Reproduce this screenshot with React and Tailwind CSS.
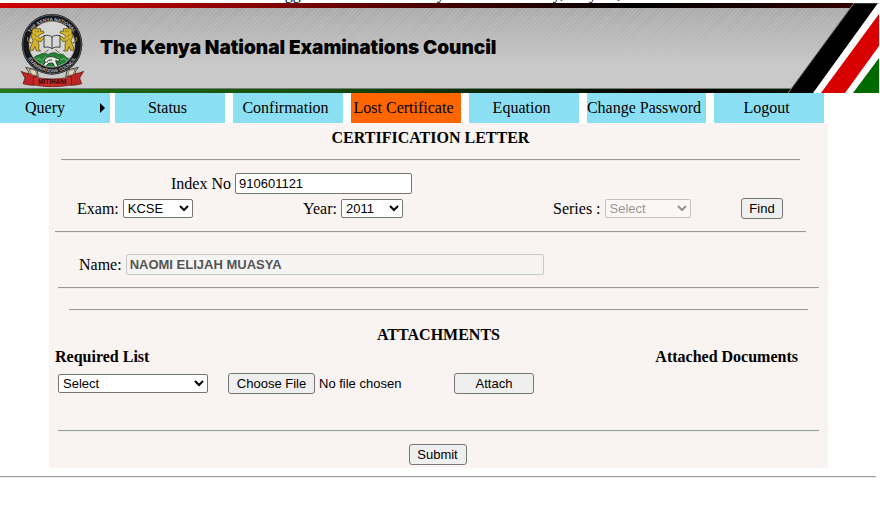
import React from "react";

const NAV_ITEMS = [
  { label: "Status" },
  { label: "Confirmation" },
  { label: "Lost Certificate", active: true },
  { label: "Equation" },
  { label: "Change Password", wide: true },
  { label: "Logout" },
];

const buttonClass =
  "h-[21px] rounded-[3px] border border-[#767676] bg-[#efefef] font-['Liberation_Sans',Arial,sans-serif] text-[13px] leading-[17px] text-black";
const selectClass =
  "h-[19px] rounded-[2px] border border-[#767676] bg-white font-['Liberation_Sans',Arial,sans-serif] text-[13px] leading-[17px] text-black";
const inputClass =
  "h-[21px] rounded-[2px] border px-[3px] font-['Liberation_Sans',Arial,sans-serif] text-[13px] leading-[17px]";

function Rule({ className = "" }) {
  return <hr className={`h-[2px] border-t border-b border-t-[#999999] border-b-[#eeeeee] ${className}`} />;
}

function Lion() {
  return (
    <g stroke="#4a3a08" strokeWidth="2" fill="#d3b52b">
      <path d="M62 62c-8-3-13 6-10 13-4 8-3 15 2 22l-4 13c-4 5-3 12-6 17h11l4-12 6 14h12l-6-6 1-14-4-10 10 2 8-9 9-3-3-6-11 3-7 6-5-7 10-8 8-2-2-6-9 1 1-8z" />
      <path d="M49 105c-10-2-14-10-10-18" fill="none" strokeWidth="4" />
      <path d="M49 105c-10-2-14-10-10-18" fill="none" stroke="#d3b52b" strokeWidth="2" />
      <path d="M60 68l5 5M57 78l8 9M58 92l7 6M66 69l6 1" fill="none" stroke="#6d5510" />
    </g>
  );
}

function Emblem() {
  return (
    <svg viewBox="0 0 225 240" className="h-[80px] w-[75px] shrink-0" role="img" aria-label="Council emblem">
      <defs>
        <path id="ring-top" d="M34 116a77 77 0 0 1 154 0" />
        <path id="ring-bottom" d="M28 110a83 83 0 0 0 166 0" />
        <clipPath id="ring-inner">
          <circle cx="111" cy="109" r="67" />
        </clipPath>
      </defs>
      <path d="M32 178l34 8 4 20-36-4 8-10zM190 178l-34 8-4 20 36-4-8-10z" fill="#c9c2a8" stroke="#4d4a3a" strokeWidth="3" />
      <circle cx="111" cy="109" r="91" fill="#17171b" />
      <circle cx="111" cy="109" r="88" fill="none" stroke="#777b80" strokeWidth="2" />
      <circle cx="111" cy="109" r="69" fill="#d4d5d4" stroke="#8a8d90" strokeWidth="2" />
      <g clipPath="url(#ring-inner)">
        <path d="M45 158c10-3 14-17 27-17 10-8 21-4 28-2 10-6 24-6 30 0 12-4 20 4 24 10l20 7-20 32H70z" fill="#268035" stroke="#12491e" strokeWidth="2" />
        <path d="M56 160l16-9 8 7 12-11 8 6M126 148l12 8 9-5 12 11M74 168l12-5" fill="none" stroke="#51a958" strokeWidth="4" />
        <path d="M88 157c4-11 22-15 35-7l11 3-2 7-10-2 6 16 8 6h-14l-9-15-12 1-9 10h-9l8-14z" fill="#e5e8df" stroke="#24382a" strokeWidth="3" />
        <path d="M96 164c0-6 8-9 15-8" fill="none" stroke="#24382a" strokeWidth="3" />
      </g>
      <Lion />
      <g transform="translate(222 0) scale(-1 1)">
        <Lion />
      </g>
      <path d="M87 83c9-2 18-1 24 4 6-5 15-6 24-4v35c-9-2-18-1-24 4-6-5-15-6-24-4z" fill="#d8d8d7" stroke="#3b3e42" strokeWidth="3" />
      <path d="M111 87v35" stroke="#34373b" strokeWidth="3" />
      <path d="M101 125l-13 10M121 125l13 10" stroke="#7c674a" strokeWidth="3" />
      <g fill="#b9b9b9" fontFamily="Liberation Sans, Arial, sans-serif" fontWeight="700" fontSize="14">
        <text textAnchor="middle">
          <textPath href="#ring-top" startOffset="50%">THE KENYA NATIONAL</textPath>
        </text>
        <text textAnchor="middle">
          <textPath href="#ring-bottom" startOffset="50%">EXAMINATIONS COUNCIL</textPath>
        </text>
      </g>
      <path d="M18 190c16 7 30 9 44 9l-4 33c-12 0-22-2-34-5l6-17z" fill="#bf2424" stroke="#4a1515" strokeWidth="2" />
      <path d="M206 190c-16 7-30 9-44 9l4 33c12 0 22-2 34-5l-6-17z" fill="#bf2424" stroke="#4a1515" strokeWidth="2" />
      <path d="M43 183l19 4 4 16-16-3zM181 183l-19 4-4 16 16-3z" fill="#ddd8c2" stroke="#5a5542" strokeWidth="2" />
      <path d="M55 206c36 9 78 9 114 0v24c-36 8-78 8-114 0z" fill="#cb2b27" stroke="#571515" strokeWidth="2" />
      <text x="112" y="229" textAnchor="middle" fill="#2d0808" fontFamily="Liberation Sans, Arial, sans-serif" fontWeight="700" fontSize="19">
        MITIHANI
      </text>
    </svg>
  );
}

function FlagStripes() {
  return (
    <svg viewBox="0 0 91 90" className="absolute top-0 right-0 h-[90px] w-[91px]" aria-hidden="true">
      <path d="M66 0H91V90H0z" fill="#fff" />
      <path d="M66 0H90L25 90H0z" fill="#000" />
      <path d="M91 11V43L57 90H33z" fill="#d90000" />
      <path d="M91 55V90H65z" fill="#006a00" />
      <path d="M0 90L66 0H91" fill="none" stroke="#777" strokeWidth="1" />
    </svg>
  );
}

function Banner() {
  return (
    <header className="relative mr-px">
      <div className="h-[5px] bg-[linear-gradient(to_right,#cc0000_0%,#b80000_11%,#700000_36%,#000000_72%,#180000_85%,#3a0000_100%)]" />
      <div className="flex h-[81px] items-center border-b border-[#71806e] bg-[linear-gradient(to_bottom,rgba(201,201,201,0)_0%,rgba(201,201,201,1)_72%),repeating-linear-gradient(135deg,#a6a6a6_0px,#a6a6a6_1px,#b2b2b2_1px,#b2b2b2_3px)] pl-[15px]">
        <Emblem />
        <h1 className="ml-[10px] font-['Inter','Liberation_Sans',sans-serif] text-[19px] leading-6 font-black whitespace-nowrap text-black">
          The Kenya National Examinations Council
        </h1>
      </div>
      <div className="h-[4px] bg-[linear-gradient(to_right,#267a18_0%,#1d6510_11%,#174d12_36%,#000000_76%,#062006_100%)]" />
      <FlagStripes />
    </header>
  );
}

function Nav() {
  return (
    <nav className="flex text-black">
      <a href="#query" className="mr-[5px] flex h-[30px] w-[110px] items-center justify-between bg-[#8bdff3] pr-[5px] pl-[25px]">
        Query
        <svg viewBox="0 0 5 10" className="h-[10px] w-[5px]" aria-hidden="true">
          <path d="M0 0L5 5L0 10z" fill="#000" />
        </svg>
      </a>
      <div className="flex gap-2">
        {NAV_ITEMS.map((item) => (
          <a
            key={item.label}
            href="#page"
            aria-current={item.active ? "page" : undefined}
            className={`flex h-[30px] items-center justify-center pr-[5px] whitespace-nowrap ${
              item.wide ? "w-[119px]" : "w-[110px]"
            } ${item.active ? "bg-[#ff6600]" : "bg-[#8bdff3]"}`}
          >
            {item.label}
          </a>
        ))}
      </div>
    </nav>
  );
}

export default function App() {
  return (
    <div className="bg-white font-['Liberation_Serif','Times_New_Roman',serif] text-[16px] leading-[18px] text-black">
      <div className="flex h-[3px] items-end justify-center gap-4 overflow-hidden pl-[44px] whitespace-nowrap">
        <span>Logged in as Naomi Muasya</span>
        <span>on Wednesday, May 10, 2023</span>
      </div>
      <Banner />
      <Nav />
      <form className="mr-[52px] ml-[49px] bg-[#f9f3f1] pb-[3px]" onSubmit={(e) => e.preventDefault()}>
        <section className="pt-[6px]">
          <h2 className="pr-[16px] text-center font-bold">CERTIFICATION LETTER</h2>
          <Rule className="mt-[12px] mr-[28px] ml-[12px]" />
          <div className="mt-[12px] flex items-center gap-1 pl-[122px]">
            <label htmlFor="index-no">Index No</label>
            <input id="index-no" defaultValue="910601121" className={`${inputClass} w-[177px] border-[#767676] bg-white text-black`} />
          </div>
          <div className="mt-[4px] grid grid-cols-[226px_250px_188px_auto] items-center justify-start pl-[28px]">
            <div className="flex items-center gap-1">
              <label htmlFor="exam">Exam:</label>
              <select id="exam" className={`${selectClass} w-[70px]`}>
                <option>KCSE</option>
              </select>
            </div>
            <div className="flex items-center gap-1">
              <label htmlFor="year">Year:</label>
              <select id="year" className={`${selectClass} w-[62px]`}>
                <option>2011</option>
              </select>
            </div>
            <div className="flex items-center gap-1">
              <label htmlFor="series">Series :</label>
              <select id="series" disabled className={`${selectClass} w-[86px] opacity-40`}>
                <option>Select</option>
              </select>
            </div>
            <button type="button" className={`${buttonClass} w-[42px]`}>
              Find
            </button>
          </div>
          <Rule className="mt-[12px] mr-[22px] ml-[6px]" />
        </section>

        <section className="pt-[21px]">
          <div className="flex items-center gap-1 pl-[30px]">
            <label htmlFor="name">Name:</label>
            <input
              id="name"
              disabled
              defaultValue="NAOMI ELIJAH MUASYA"
              className={`${inputClass} w-[418px] border-[#c8c8c8] bg-[#f6f4f3] font-bold text-[#545454]`}
            />
          </div>
          <Rule className="mt-[12px] mr-[9px] ml-[9px]" />
          <Rule className="mt-[20px] mr-[20px] ml-[20px]" />
        </section>

        <section className="pt-[15px]">
          <h2 className="text-center font-bold">ATTACHMENTS</h2>
          <div className="mt-[4px] flex justify-between pr-[30px] pl-[6px] font-bold">
            <h3>Required List</h3>
            <h3>Attached Documents</h3>
          </div>
          <div className="mt-[7px] flex items-center pl-[9px]">
            <select aria-label="Required list" className={`${selectClass} w-[150px]`}>
              <option>Select</option>
            </select>
            <input
              type="file"
              aria-label="Document to attach"
              className="ml-[20px] h-[21px] w-[226px] font-['Liberation_Sans',Arial,sans-serif] text-[13px] leading-[21px] text-black file:mr-1 file:h-[21px] file:w-[87px] file:rounded-[3px] file:border file:border-solid file:border-[#767676] file:bg-[#efefef] file:p-0 file:text-center file:leading-[17px] file:text-black"
            />
            <button type="button" className={`${buttonClass} w-[80px]`}>
              Attach
            </button>
          </div>
          <Rule className="mt-[36px] mr-[9px] ml-[9px]" />
          <div className="mt-[12px] flex justify-center pr-[2px]">
            <button type="submit" className={`${buttonClass} w-[58px]`}>
              Submit
            </button>
          </div>
        </section>
      </form>
      <Rule className="mt-[8px] mr-1" />
    </div>
  );
}
